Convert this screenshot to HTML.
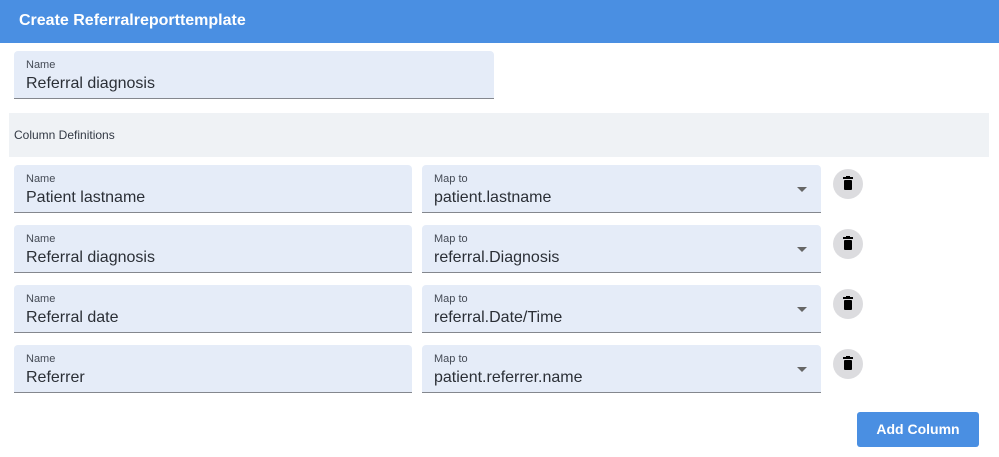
<!DOCTYPE html>
<html><head><style>
body{margin:0;width:999px;height:457px;background:#fff;font-family:"Liberation Sans",Arial,sans-serif;position:relative;overflow:hidden}
.hdr{position:absolute;left:0;top:0;width:999px;height:43px;background:#4a8fe2;color:#fff;font-weight:bold;font-size:16px;line-height:41px;padding-left:19px;box-sizing:border-box}
.f{position:absolute;height:48px;background:#e5ecf8;border-bottom:1px solid #84878e;border-radius:4px 4px 0 0;box-sizing:border-box}
.f .l{position:absolute;left:12px;top:8px;font-size:11px;color:#444a55}
.f .v{position:absolute;left:12px;top:24px;font-size:16px;color:#2b2f36}
.f .a{position:absolute;right:14px;top:22px;width:0;height:0;border-left:5px solid transparent;border-right:5px solid transparent;border-top:5px solid #666}
.band{position:absolute;left:9px;top:113px;width:980px;height:44px;background:#eff2f5;font-size:12px;color:#333a45;line-height:44px;padding-left:5px;box-sizing:border-box}
.t{position:absolute;width:30px;height:30px;border-radius:50%;background:#dcdcdf}
.t svg{position:absolute;left:9px;top:7px}
.btn{position:absolute;left:857px;top:412px;width:122px;height:35px;background:#4a8fe2;border-radius:3px;color:#fff;font-weight:bold;font-size:14px;text-align:center;line-height:35px}
</style></head><body>
<div class="hdr">Create Referralreporttemplate</div>
<div class="f" style="left:14px;top:51px;width:480px"><span class="l">Name</span><span class="v">Referral diagnosis</span></div>
<div class="band">Column Definitions</div>

<div class="f" style="left:14px;top:165px;width:398px"><span class="l">Name</span><span class="v">Patient lastname</span></div>
<div class="f" style="left:422px;top:165px;width:399px"><span class="l">Map to</span><span class="v">patient.lastname</span><span class="a"></span></div>
<div class="t" style="left:833px;top:169px"><svg width="12" height="14" viewBox="0 0 12 14"><rect x="1" y="1" width="10" height="2" fill="#000"/><rect x="4" y="0" width="4" height="2" fill="#000"/><rect x="2" y="4" width="8" height="10" rx="1" fill="#000"/></svg></div>

<div class="f" style="left:14px;top:225px;width:398px"><span class="l">Name</span><span class="v">Referral diagnosis</span></div>
<div class="f" style="left:422px;top:225px;width:399px"><span class="l">Map to</span><span class="v">referral.Diagnosis</span><span class="a"></span></div>
<div class="t" style="left:833px;top:229px"><svg width="12" height="14" viewBox="0 0 12 14"><rect x="1" y="1" width="10" height="2" fill="#000"/><rect x="4" y="0" width="4" height="2" fill="#000"/><rect x="2" y="4" width="8" height="10" rx="1" fill="#000"/></svg></div>

<div class="f" style="left:14px;top:285px;width:398px"><span class="l">Name</span><span class="v">Referral date</span></div>
<div class="f" style="left:422px;top:285px;width:399px"><span class="l">Map to</span><span class="v">referral.Date/Time</span><span class="a"></span></div>
<div class="t" style="left:833px;top:289px"><svg width="12" height="14" viewBox="0 0 12 14"><rect x="1" y="1" width="10" height="2" fill="#000"/><rect x="4" y="0" width="4" height="2" fill="#000"/><rect x="2" y="4" width="8" height="10" rx="1" fill="#000"/></svg></div>

<div class="f" style="left:14px;top:345px;width:398px"><span class="l">Name</span><span class="v">Referrer</span></div>
<div class="f" style="left:422px;top:345px;width:399px"><span class="l">Map to</span><span class="v">patient.referrer.name</span><span class="a"></span></div>
<div class="t" style="left:833px;top:349px"><svg width="12" height="14" viewBox="0 0 12 14"><rect x="1" y="1" width="10" height="2" fill="#000"/><rect x="4" y="0" width="4" height="2" fill="#000"/><rect x="2" y="4" width="8" height="10" rx="1" fill="#000"/></svg></div>

<div class="btn">Add Column</div>
</body></html>
